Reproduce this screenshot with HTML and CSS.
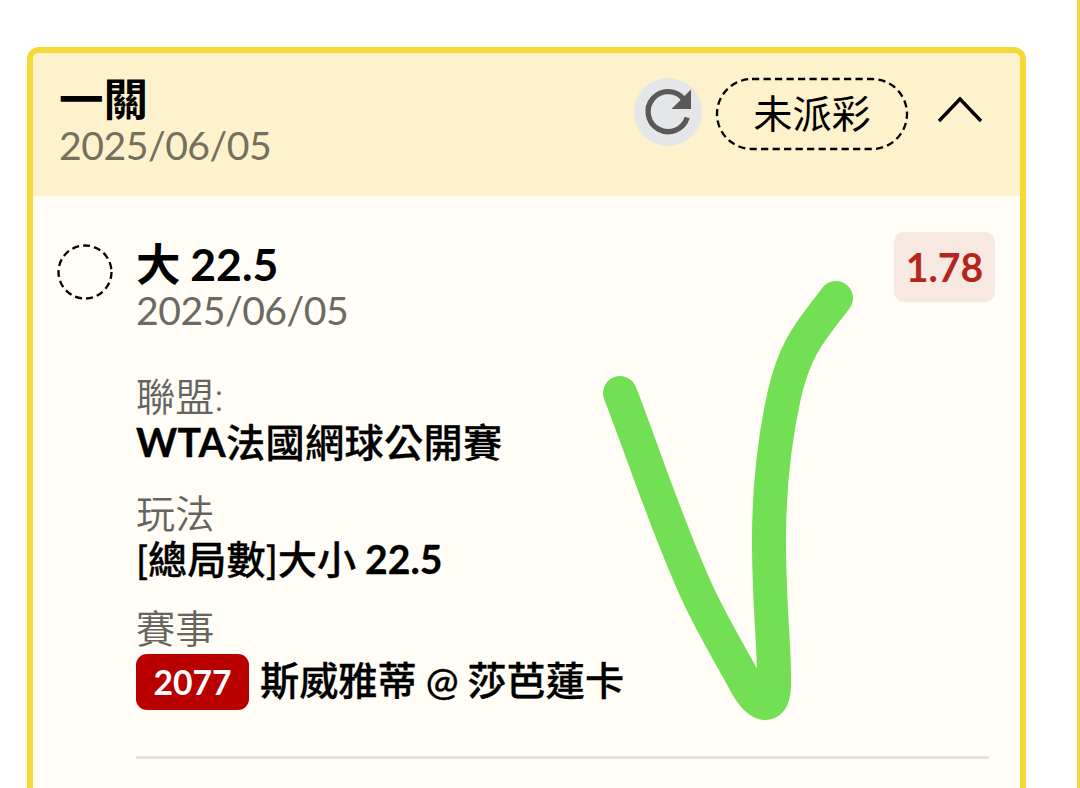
FILE: index.html
```html
<!DOCTYPE html>
<html lang="zh-Hant">
<head>
    <meta charset="UTF-8">
    <meta name="viewport" content="width=device-width, initial-scale=1.0">
    <title>一關</title>
    <link rel="stylesheet" href="styles.css">
</head>
<body>
    <div class="page">
        <div class="card">
            <div class="card-header">
                <div class="header-text">
                    <h2 class="title">一關</h2>
                    <p class="date">2025/06/05</p>
                </div>
                <button class="refresh-button" aria-label="refresh">
                    <svg width="68" height="68" viewBox="0 0 68 68">
                        <path d="M53.2 39.5 A20 20 0 1 1 50 21.5" fill="none" stroke="#595959" stroke-width="5.4"/>
                        <path d="M57 11.5 V31 H37.5 Z" fill="#595959"/>
                    </svg>
                </button>
                <span class="status">
                    <svg class="outline" width="194" height="74" viewBox="0 0 194 74">
                        <rect x="2" y="2" width="190" height="70" rx="35"/>
                    </svg>
                    未派彩
                </span>
                <svg class="arrow" width="46" height="28" viewBox="0 0 46 28">
                    <path d="M2 25 L23 3 L44 25" fill="none" stroke="#000" stroke-width="3.4"/>
                </svg>
            </div>

            <div class="card-body">
                <svg class="radio" width="56" height="56" viewBox="0 0 56 56">
                    <circle cx="28" cy="28" r="26.5"/>
                </svg>
                <div class="bet">
                    <div class="bet-top">
                        <div>
                            <h2 class="title">大 22.5</h2>
                            <p class="date">2025/06/05</p>
                        </div>
                        <span class="odds">1.78</span>
                    </div>
                    <dl class="details">
                        <dt>聯盟:</dt>
                        <dd class="league"><b>WTA</b>法國網球公開賽</dd>
                        <dt>玩法</dt>
                        <dd>[總局數]大小 <b>22.5</b></dd>
                        <dt>賽事</dt>
                        <dd class="match"><span class="number">2077</span><span class="teams">斯威雅蒂 @ 莎芭蓮卡</span></dd>
                    </dl>
                </div>
            </div>

            <!-- hand drawn tick -->
            <svg class="tick" width="252" height="442" viewBox="602 280 252 442">
                <path d="M620 393 C643 452 665 521 696 590 C711 623 728 651 745 682 C757 705 773 713 774 686 C775 650 769 610 769 540 C769 490 774 442 784 396 C795 346 812 330 836 298"/>
            </svg>
        </div>
        <div class="next-card"></div>
    </div>
</body>
</html>
```
FILE: styles.css
```css
* {
    box-sizing: border-box;
}
body {
    font-family: Lato, 'Noto Sans CJK TC', sans-serif;
    margin: 0;
    background-color: #ffffff;
    color: #000000;
}
.page {
    display: flex;
    height: 788px;
    overflow: hidden;
    padding-left: 27px;
}
.card {
    position: relative;
    flex: none;
    width: 999px;
    height: 800px;
    margin-top: 47px;
    border: 6px solid #f5d936;
    border-radius: 12px;
    background-color: #fffdf5;
}
.next-card {
    flex: none;
    width: 200px;
    margin-left: 51px;
    border-left: 6px solid #f5d936;
}
.card-header {
    display: flex;
    align-items: flex-start;
    height: 143px;
    padding: 23px 37px 0 26px;
    border-radius: 6px 6px 0 0;
    background-color: #fef2cc;
}
.header-text {
    flex: 1;
}
.title {
    margin: 0;
    font-size: 44.5px;
    line-height: 46px;
    font-weight: bold;
    word-spacing: -1px;
}
.date {
    margin: 0;
    font-size: 39.2px;
    line-height: 46px;
    letter-spacing: -0.5px;
    color: #6b6a62;
}
.card-header .date {
    color: #75705c;
}
.refresh-button {
    width: 68px;
    height: 68px;
    margin-top: 2px;
    padding: 0;
    border: none;
    border-radius: 50%;
    background-color: #e5e6e8;
}
.refresh-button svg {
    display: block;
}
.status {
    position: relative;
    width: 194px;
    height: 74px;
    margin: 1px 0 0 13px;
    font-size: 39.2px;
    line-height: 71px;
    text-align: center;
}
.outline {
    position: absolute;
    left: 0;
    top: 0;
}
.outline rect,
.radio circle {
    fill: none;
    stroke: #000000;
    stroke-width: 2.3;
    stroke-dasharray: 7.2 4.3;
}
.radio circle {
    stroke-dasharray: 7 4.1;
}
.arrow {
    margin: 20px 0 0 28px;
}
.card-body {
    display: flex;
    align-items: flex-start;
    padding: 36px 25px 0 24px;
}
.radio {
    flex: none;
    margin-top: 12px;
}
.bet {
    flex: 1;
    margin-left: 23px;
}
.bet-top {
    display: flex;
    justify-content: space-between;
    align-items: flex-start;
}
.bet-top .title {
    margin-top: 9px;
}
.odds {
    width: 101px;
    height: 70px;
    border-radius: 10px;
    background-color: #f7e8e1;
    color: #b3261e;
    font-size: 39.2px;
    font-weight: bold;
    line-height: 70px;
    text-align: center;
}
.details {
    height: 426px;
    margin: 0 6px 0 0;
    padding-top: 40px;
    border-bottom: 3px solid #e5e2dc;
    font-size: 39.2px;
    line-height: 46px;
}
.details dt {
    font-weight: 350;
    color: #65645d;
}
.details dd {
    margin: 0 0 24px;
    font-weight: 500;
    word-spacing: -1px;
    -webkit-text-stroke: 0.3px;
}
.details .league {
    margin-bottom: 25px;
    letter-spacing: 0.3px;
}
.details dt:last-of-type {
    margin-top: -1px;
}
.details .match {
    display: flex;
    align-items: flex-start;
    margin-top: 3px;
}
.number {
    width: 113px;
    height: 56px;
    margin-right: 11px;
    border-radius: 11px;
    background-color: #b80000;
    color: #ffffff;
    font-size: 33.7px;
    font-weight: bold;
    line-height: 56px;
    text-align: center;
    -webkit-text-stroke: 0;
}
.teams {
    line-height: 52px;
}
.tick {
    position: absolute;
    left: 569px;
    top: 227px;
}
.tick path {
    fill: none;
    stroke: #73df55;
    stroke-width: 34;
    stroke-linecap: round;
    stroke-linejoin: round;
}
```
